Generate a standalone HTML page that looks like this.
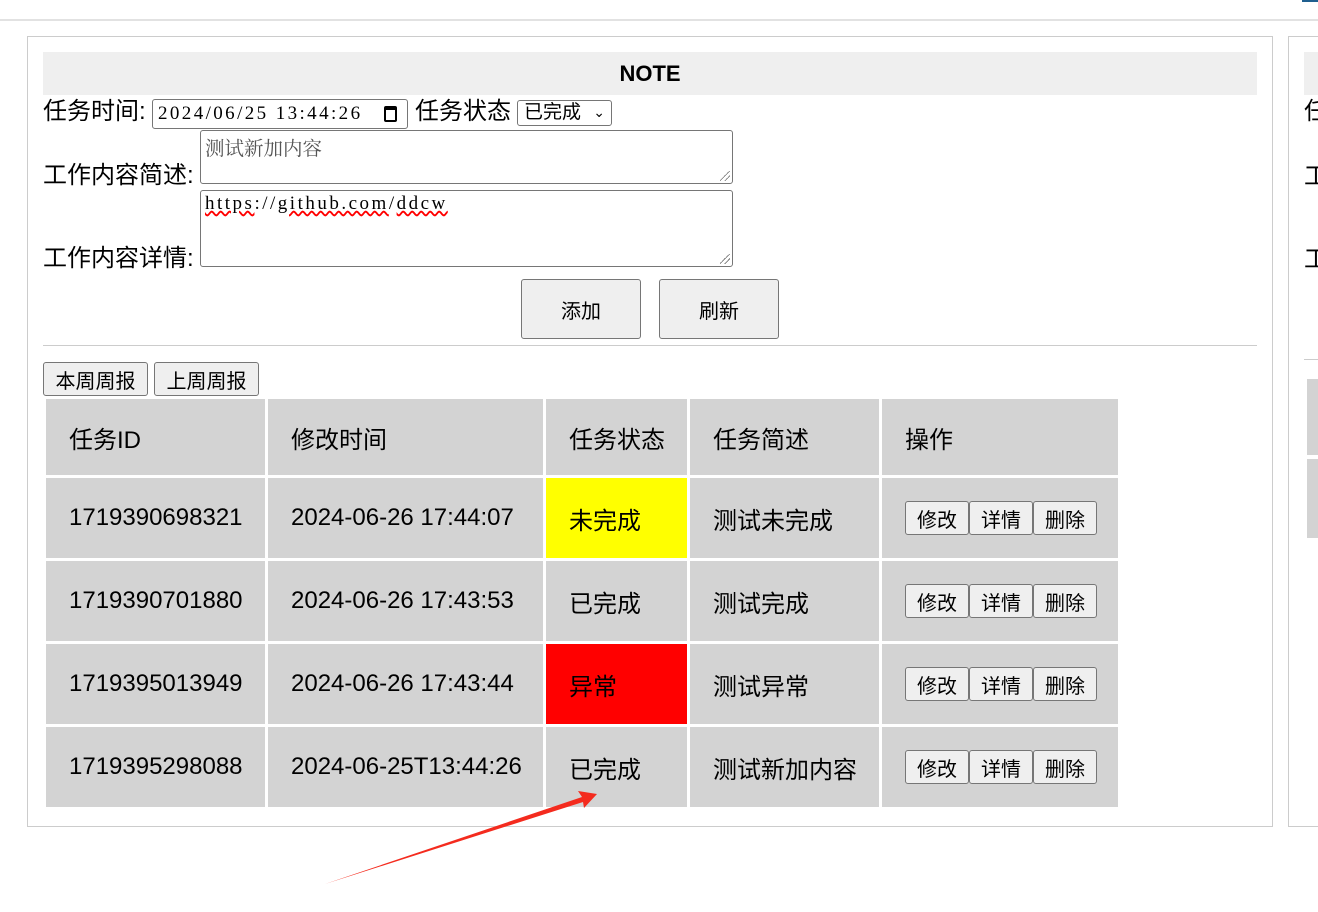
<!DOCTYPE html>
<html><head><meta charset="utf-8"><style>
*{box-sizing:border-box}
body{margin:0;width:1318px;height:912px;overflow:hidden;background:#fff;font-family:"Liberation Sans","Noto Sans CJK SC",sans-serif;color:#000;position:relative}
.a{position:absolute}
.lbl{font-size:24px;line-height:28px}
.btn{position:absolute;background:#efefef;border:1px solid #767676;border-radius:3px;display:flex;align-items:center;justify-content:center;font-size:20px}
.c{position:absolute;background:#d3d3d3;font-size:24px;display:flex;align-items:center;padding-left:23px}
.ta{position:absolute;border:1px solid #767676;border-radius:3px;background:#fff;font-family:"Liberation Serif","Noto Serif CJK SC",serif;font-size:18px;padding:2px 4px}
.rz{position:absolute;right:2px;bottom:2px;width:10px;height:10px;background:linear-gradient(135deg,transparent 45%,#777 45%,#777 52%,transparent 52%,transparent 70%,#777 70%,#777 77%,transparent 77%)}
</style></head><body>
<div class="a" style="left:0;top:19px;width:1318px;height:2px;background:#e2e2e2"></div>
<div class="a" style="left:1302px;top:0;width:16px;height:2px;background:#1f5f8f"></div>
<div class="a" style="left:27px;top:36px;width:1246px;height:791px;border:1px solid #ccc"></div>
<div class="a" style="left:1288px;top:36px;width:40px;height:791px;border:1px solid #ccc"></div>
<div class="a" style="left:43px;top:52px;width:1214px;height:43px;background:#efefef;text-align:center;font-weight:bold;font-size:22px;line-height:44px">NOTE</div>
<div class="a" style="left:1304px;top:52px;width:20px;height:43px;background:#efefef"></div>
<div class="a lbl" style="left:1304px;top:98px">任</div>
<div class="a lbl" style="left:1304px;top:163px">工</div>
<div class="a lbl" style="left:1304px;top:246px">工</div>
<div class="a" style="left:1304px;top:359px;width:20px;height:1px;background:#ccc"></div>
<div class="a" style="left:1307px;top:379px;width:20px;height:76px;background:#d3d3d3"></div>
<div class="a" style="left:1307px;top:459px;width:20px;height:79px;background:#d3d3d3"></div>

<div class="a lbl" style="left:43px;top:98px">任务时间:</div>
<div class="a" style="left:152px;top:99px;width:256px;height:30px;border:1px solid #767676;border-radius:3px;font-family:'Liberation Serif','Noto Serif CJK SC',serif;font-size:19px;line-height:28px;padding-left:5px;letter-spacing:2.4px">2024/06/25 13:44:26</div>
<div class="a" style="left:384px;top:106px;width:13px;height:16px;border:2px solid #000;border-top-width:4px;border-radius:2px"></div>
<div class="a lbl" style="left:415px;top:98px">任务状态</div>
<div class="a" style="left:517px;top:100px;width:95px;height:26px;border:1px solid #767676;border-radius:3px;font-size:19px;line-height:24px;padding-left:6px">已完成<span style="position:absolute;right:6px;top:-1px;font-size:14px">&#8964;</span></div>

<div class="a lbl" style="left:43px;top:162px">工作内容简述:</div>
<div class="ta" style="left:200px;top:130px;width:533px;height:54px;color:#555;font-size:19.5px">测试新加内容<div class="rz"></div></div>
<div class="a lbl" style="left:43px;top:245px">工作内容详情:</div>
<div class="ta" style="left:200px;top:190px;width:533px;height:77px;letter-spacing:2.5px;font-size:19px"><span style="text-decoration:underline wavy red">https</span>://<span style="text-decoration:underline wavy red">github.com</span>/<span style="text-decoration:underline wavy red">ddcw</span><div class="rz"></div></div>

<div class="btn" style="left:521px;top:279px;width:120px;height:60px">添加</div>
<div class="btn" style="left:659px;top:279px;width:120px;height:60px">刷新</div>
<div class="a" style="left:43px;top:345px;width:1214px;height:1px;background:#ccc"></div>
<div class="btn" style="left:43px;top:362px;width:105px;height:34px">本周周报</div>
<div class="btn" style="left:154px;top:362px;width:105px;height:34px">上周周报</div>

<div class="c" style="left:46px;top:399px;width:219px;height:76px">任务ID</div>
<div class="c" style="left:268px;top:399px;width:275px;height:76px">修改时间</div>
<div class="c" style="left:546px;top:399px;width:141px;height:76px">任务状态</div>
<div class="c" style="left:690px;top:399px;width:189px;height:76px">任务简述</div>
<div class="c" style="left:882px;top:399px;width:236px;height:76px">操作</div>

<div class="c" style="left:46px;top:478px;width:219px;height:80px">1719390698321</div>
<div class="c" style="left:268px;top:478px;width:275px;height:80px">2024-06-26 17:44:07</div>
<div class="c" style="left:546px;top:478px;width:141px;height:80px;background:#ff0">未完成</div>
<div class="c" style="left:690px;top:478px;width:189px;height:80px">测试未完成</div>
<div class="c" style="left:882px;top:478px;width:236px;height:80px"></div>

<div class="c" style="left:46px;top:561px;width:219px;height:80px">1719390701880</div>
<div class="c" style="left:268px;top:561px;width:275px;height:80px">2024-06-26 17:43:53</div>
<div class="c" style="left:546px;top:561px;width:141px;height:80px">已完成</div>
<div class="c" style="left:690px;top:561px;width:189px;height:80px">测试完成</div>
<div class="c" style="left:882px;top:561px;width:236px;height:80px"></div>

<div class="c" style="left:46px;top:644px;width:219px;height:80px">1719395013949</div>
<div class="c" style="left:268px;top:644px;width:275px;height:80px">2024-06-26 17:43:44</div>
<div class="c" style="left:546px;top:644px;width:141px;height:80px;background:#f00">异常</div>
<div class="c" style="left:690px;top:644px;width:189px;height:80px">测试异常</div>
<div class="c" style="left:882px;top:644px;width:236px;height:80px"></div>

<div class="c" style="left:46px;top:727px;width:219px;height:80px">1719395298088</div>
<div class="c" style="left:268px;top:727px;width:275px;height:80px">2024-06-25T13:44:26</div>
<div class="c" style="left:546px;top:727px;width:141px;height:80px">已完成</div>
<div class="c" style="left:690px;top:727px;width:189px;height:80px">测试新加内容</div>
<div class="c" style="left:882px;top:727px;width:236px;height:80px"></div>

<div class="btn" style="left:905px;top:501px;width:64px;height:34px">修改</div>
<div class="btn" style="left:969px;top:501px;width:64px;height:34px">详情</div>
<div class="btn" style="left:1033px;top:501px;width:64px;height:34px">删除</div>
<div class="btn" style="left:905px;top:584px;width:64px;height:34px">修改</div>
<div class="btn" style="left:969px;top:584px;width:64px;height:34px">详情</div>
<div class="btn" style="left:1033px;top:584px;width:64px;height:34px">删除</div>
<div class="btn" style="left:905px;top:667px;width:64px;height:34px">修改</div>
<div class="btn" style="left:969px;top:667px;width:64px;height:34px">详情</div>
<div class="btn" style="left:1033px;top:667px;width:64px;height:34px">删除</div>
<div class="btn" style="left:905px;top:750px;width:64px;height:34px">修改</div>
<div class="btn" style="left:969px;top:750px;width:64px;height:34px">详情</div>
<div class="btn" style="left:1033px;top:750px;width:64px;height:34px">删除</div>

<svg class="a" style="left:0;top:0" width="1318" height="912">
<polygon points="325,884 582,797 578,791 597,794 584,808 583,802" fill="#f42b1e"/>
</svg>
</body></html>
